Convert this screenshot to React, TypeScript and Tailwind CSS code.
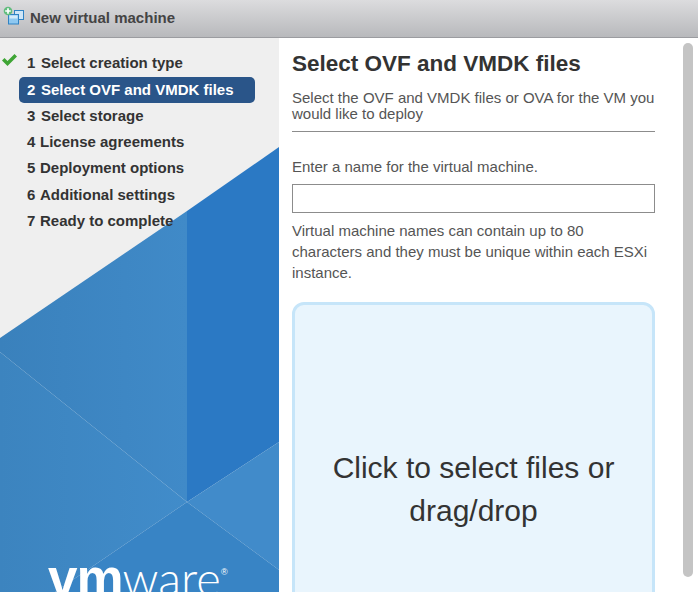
const steps = [
  "Select creation type",
  "Select OVF and VMDK files",
  "Select storage",
  "License agreements",
  "Deployment options",
  "Additional settings",
  "Ready to complete",
];

function WizardIcon() {
  return (
    <svg width="21" height="19" viewBox="3 6 21 19" className="shrink-0">
      <rect x="14.5" y="10.5" width="9" height="9" fill="#cfe6f7" stroke="#2f83c4" />
      <rect x="8.5" y="14.5" width="10" height="9.5" fill="#8ec8f0" stroke="#2f83c4" />
      <rect x="9.5" y="15.5" width="8" height="3" fill="#d4ecfb" />
      <circle cx="8" cy="11" r="4.3" fill="#62bd7e" />
      <path d="M8 8.2v5.6M5.2 11h5.6" stroke="#fff" strokeWidth="1.7" />
    </svg>
  );
}

function SidebarArt() {
  return (
    <svg viewBox="0 0 279 554" width="279" height="554" className="absolute left-0 top-0">
      <defs>
        <linearGradient id="upperLeft" x1="0" x2="1" y1="0" y2="0">
          <stop offset="0" stopColor="#3a81bc" />
          <stop offset="1" stopColor="#408ac8" />
        </linearGradient>
        <linearGradient id="lowerLeft" x1="0" x2="1" y1="0" y2="0">
          <stop offset="0" stopColor="#3c84bf" />
          <stop offset="1" stopColor="#418cca" />
        </linearGradient>
      </defs>
      <rect width="279" height="554" fill="#efefef" />
      <polygon points="0,300 187,173 187,464 0,314" fill="url(#upperLeft)" />
      <polygon points="187,173 279,109 279,404 187,464" fill="#2b79c4" />
      <polygon points="0,314 187,464 55,554 0,554" fill="url(#lowerLeft)" />
      <polygon points="187,464 279,404 279,532" fill="#418bca" />
      <polygon points="187,464 279,532 279,554 55,554" fill="#3884c5" />
    </svg>
  );
}

export default function App() {
  return (
    <div className="w-[698px] h-[592px] overflow-hidden flex flex-col bg-white font-['Liberation_Sans',Arial,sans-serif]">
      <div className="h-[38px] shrink-0 flex items-start gap-[6px] pl-[3px] pt-[6px] bg-gradient-to-b from-[#dcdcde] to-[#b8b9bc] border-b border-[#9b9ca0]">
        <WizardIcon />
        <span className="text-[15px] leading-[24px] font-bold text-[#444]">New virtual machine</span>
      </div>

      <div className="flex flex-1 min-h-0">
        <div className="relative w-[279px] shrink-0 overflow-hidden">
          <SidebarArt />
          <div className="relative flex flex-col pt-[13px] pl-[19px]">
            {steps.map((step, i) => (
              <div
                key={step}
                className={
                  i === 1
                    ? "relative w-[236px] h-[26px] flex items-center pl-[8px] pb-[1px] rounded-[5px] bg-[#2a5589] text-white text-[15px] font-bold"
                    : "relative w-[236px] h-[26.3px] flex items-center pl-[8px] pb-[1px] text-[#333] text-[15px] font-bold"
                }
              >
                {i === 0 && (
                  <svg width="17" height="14" viewBox="0 0 17 14" className="absolute left-[-18px] top-[2px]">
                    <path d="M1 7.5l2.5-2.5 3 3L13.5 1 16 3.5 6.5 13z" fill="#3fa535" />
                  </svg>
                )}
                <span className="w-[13px]">{i + 1}</span>
                <span className={i < 3 ? "ml-[1px]" : ""}>{step}</span>
              </div>
            ))}
          </div>
          <div className="absolute left-[48px] top-[513px] flex items-baseline text-white leading-none">
            <span className="text-[53px] font-bold tracking-[-1px]">vm</span>
            <span className="text-[47px] font-['Lato',sans-serif] font-light">ware</span>
            <span className="self-start text-[9px] mt-[17px]">®</span>
          </div>
        </div>

        <div className="relative flex-1 min-w-0 pl-[13px] pt-[12px]">
          <div className="w-[363px] flex flex-col text-[#555]">
            <h1 className="text-[22.5px] leading-[27px] font-bold text-[#333]">Select OVF and VMDK files</h1>
            <p className="mt-[13px] text-[15px] leading-[16px] pb-[9px] border-b border-[#8c8c8c]">
              Select the OVF and VMDK files or OVA for the VM you would like to deploy
            </p>
            <p className="mt-[27px] text-[15px] leading-[16px]">Enter a name for the virtual machine.</p>
            <input type="text" className="mt-[9px] w-full h-[29px] bg-white border border-[#8c8c8c] outline-none" />
            <p className="mt-[7px] text-[15px] leading-[21px]">
              Virtual machine names can contain up to 80 characters and they must be unique within each ESXi instance.
            </p>
            <div className="mt-[19px] h-[340px] shrink-0 rounded-[12px] border-[3px] border-[#c6e5f9] bg-[#e9f5fd] flex justify-center pt-[141px]">
              <p className="w-[300px] text-center text-[30px] leading-[43px] text-[#333]">Click to select files or drag/drop</p>
            </div>
          </div>
          <div className="absolute right-[5px] top-[5px] w-[10px] h-[534px] rounded-[5px] bg-[#c4c4c4]" />
        </div>
      </div>
    </div>
  );
}
